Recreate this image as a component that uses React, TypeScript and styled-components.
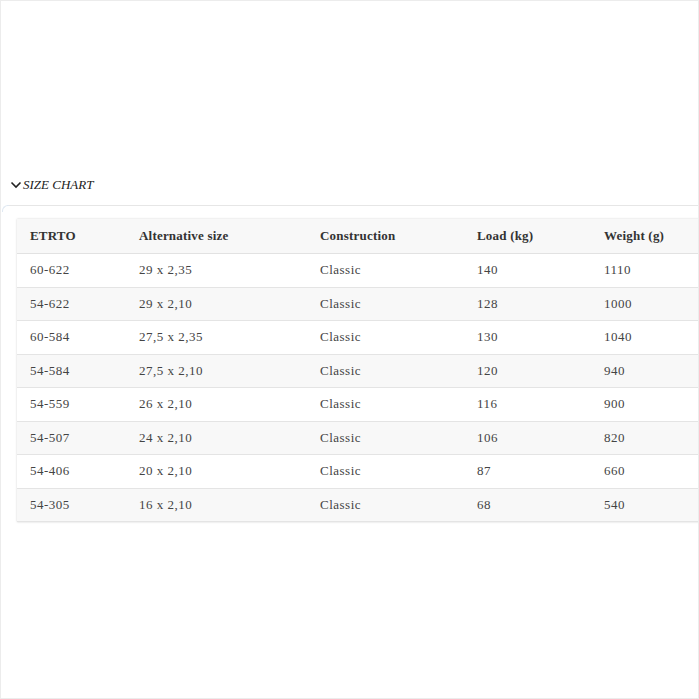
import React from 'react';
import styled, { createGlobalStyle } from 'styled-components';

const GlobalStyle = createGlobalStyle`
  html, body {
    margin: 0;
    padding: 0;
    background: #fff;
  }
  body {
    font-family: "Liberation Serif", "Times New Roman", serif;
    color: #333;
  }
`;

const Frame = styled.div`
  box-sizing: border-box;
  width: 699px;
  height: 699px;
  border: 1px solid #ececec;
  overflow: hidden;
  padding-top: 174px;
`;

const Toggle = styled.div`
  display: flex;
  align-items: center;
  gap: 1px;
  padding-left: 9px;
  height: 20px;
  font-style: italic;
  font-size: 13px;
  color: #222;
`;

const Panel = styled.div`
  position: relative;
  margin-top: 10px;
  margin-left: 6px;
  border-top: 1px solid #e6e6e6;
  padding: 13px 0 0 10px;

  &::before {
    content: '';
    position: absolute;
    left: -5px;
    top: -1px;
    width: 6px;
    height: 6px;
    border-top: 1px solid #dfe8f2;
    border-left: 1px solid #dfe8f2;
    border-top-left-radius: 6px;
  }
`;

const Table = styled.table`
  border-collapse: collapse;
  table-layout: fixed;
  width: 720px;
  font-size: 13px;
  letter-spacing: 0.5px;
  box-shadow: 0 0 2px rgba(0, 0, 0, 0.18);
`;

const Head = styled.th`
  text-align: left;
  font-weight: bold;
  letter-spacing: 0.2px;
  height: 34px;
  padding: 0 0 0 13px;
  background: #f8f8f8;
  color: #333;
  border-bottom: 1px solid #e2e2e2;
`;

const Row = styled.tr<{ $shaded: boolean }>`
  background: ${(p) => (p.$shaded ? '#f8f8f8' : '#fff')};
  border-bottom: 1px solid #e4e4e4;
`;

const Cell = styled.td`
  height: 32.5px;
  padding: 0 0 0 13px;
  color: #444;
`;

const columns = [
  { label: 'ETRTO', width: 109 },
  { label: 'Alternative size', width: 181 },
  { label: 'Construction', width: 157 },
  { label: 'Load (kg)', width: 127 },
  { label: 'Weight (g)', width: 146 },
];

const rows = [
  ['60-622', '29 x 2,35', 'Classic', '140', '1110'],
  ['54-622', '29 x 2,10', 'Classic', '128', '1000'],
  ['60-584', '27,5 x 2,35', 'Classic', '130', '1040'],
  ['54-584', '27,5 x 2,10', 'Classic', '120', '940'],
  ['54-559', '26 x 2,10', 'Classic', '116', '900'],
  ['54-507', '24 x 2,10', 'Classic', '106', '820'],
  ['54-406', '20 x 2,10', 'Classic', '87', '660'],
  ['54-305', '16 x 2,10', 'Classic', '68', '540'],
];

const Chevron = () => (
  <svg width="12" height="10" viewBox="0 0 12 10">
    <path d="M1.5 2.5 L6 7 L10.5 2.5" fill="none" stroke="#222" strokeWidth="1.6" />
  </svg>
);

export default function App() {
  return (
    <Frame>
      <GlobalStyle />
      <Toggle>
        <Chevron />
        <span>SIZE CHART</span>
      </Toggle>
      <Panel>
        <Table>
          <colgroup>
            {columns.map((c) => (
              <col key={c.label} style={{ width: c.width }} />
            ))}
          </colgroup>
          <thead>
            <tr>
              {columns.map((c) => (
                <Head key={c.label}>{c.label}</Head>
              ))}
            </tr>
          </thead>
          <tbody>
            {rows.map((r, i) => (
              <Row key={r[0]} $shaded={i % 2 === 1}>
                {r.map((v, j) => (
                  <Cell key={j}>{v}</Cell>
                ))}
              </Row>
            ))}
          </tbody>
        </Table>
      </Panel>
    </Frame>
  );
}
